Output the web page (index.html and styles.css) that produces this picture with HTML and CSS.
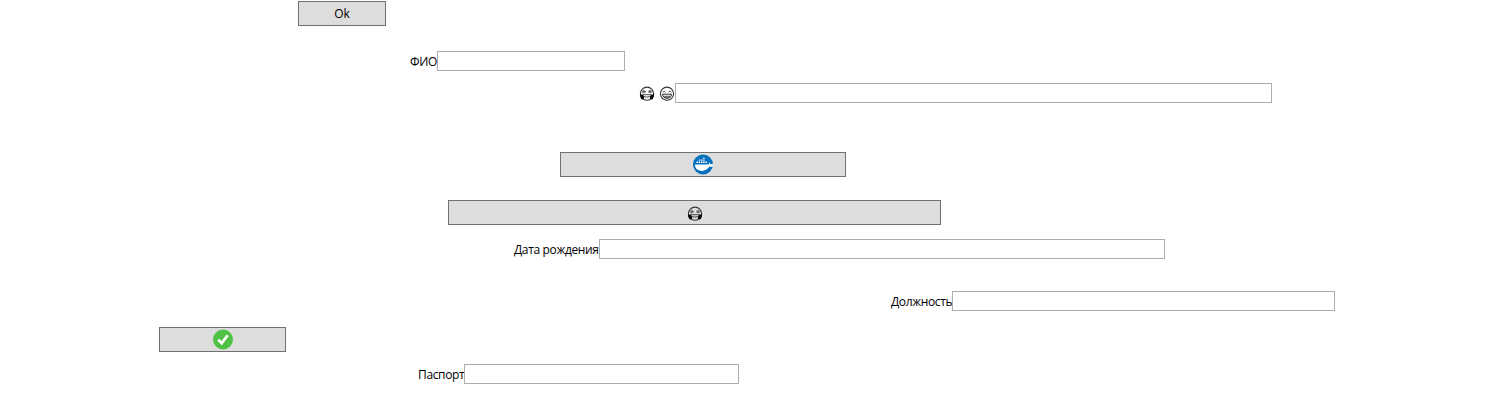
FILE: index.html
```html
<!DOCTYPE html>
<html lang="ru">
<head>
<meta charset="utf-8">
<title>Форма</title>
<link rel="stylesheet" href="styles.css">
</head>
<body>
<svg class="defs" width="0" height="0" aria-hidden="true">
  <symbol id="face-star" viewBox="0 0 16 16">
    <circle cx="8" cy="7.700" r="6.600" fill="none" stroke="#333" stroke-width="1.100"/>
    <path d="M3.200 5.300l1.700-1 1.700 1-.6 1.500H3.800zM9.400 5.300l1.700-1 1.700 1-.6 1.500H10z" fill="#777" stroke="#444" stroke-width=".5"/>
    <path d="M.9 8.500h2.700l1.300 1.600.2 2.700-1.900.8C1.900 13 1 11 .9 8.500zM15.100 8.500h-2.700l-1.300 1.600-.2 2.700 1.900.8c1.300-.6 2.200-2.600 2.300-5.100z" fill="#080808"/>
    <path d="M3.600 8.700h8.800M4.800 10.600q3.200 1 6.400 0" fill="none" stroke="#333" stroke-width=".9"/>
  </symbol>
  <symbol id="face-grin" viewBox="0 0 16 16">
    <circle cx="8" cy="7.700" r="6.600" fill="none" stroke="#333" stroke-width="1.100"/>
    <path d="M3.800 6.200q1.300-2 2.700 0M9.500 6.200q1.300-2 2.700 0" fill="none" stroke="#333" stroke-width=".9"/>
    <path d="M3.500 8.200h9c-.2 2.700-2 4.100-4.500 4.100s-4.300-1.400-4.500-4.100z" fill="#777" stroke="#222" stroke-width=".9"/>
    <path d="M4.300 9.300h7.400" stroke="#eee" stroke-width="1"/>
  </symbol>
</svg>
<main class="form">
  <button class="button button-ok">Ok</button>
  <label class="field field-name"><span class="label">ФИО</span><input class="input" type="text"></label>
  <label class="field field-mood"><span class="label label-icons"><svg class="face"><use href="#face-star"/></svg><svg class="face"><use href="#face-grin"/></svg></span><input class="input" type="text"></label>
  <button class="button button-docker" aria-label="Docker">
    <svg class="icon" viewBox="0 0 22 22">
      <circle cx="11" cy="10.500" r="10" fill="#0570be"/>
      <path d="M3 10.600h13.300c.8-.5.7-1.500.4-2.200 1 .4 1.500 1.100 1.500 1.600 1.200-.2 2.200 0 2.900.3v1.300c-1 .5-2.400.6-3.500.5-1.400 3-4.200 4.800-7.900 4.800-4.300 0-6.700-2.400-6.700-6.300z" fill="#fff"/>
      <path d="M17.600 12.100c1.200.1 2.600-.2 3.500-.7v1.700h-3.900z" fill="#ddd"/>
      <path d="M4.500 7.500H6V9H4.500zM6.700 7.500h1.500V9H6.700zM8.900 7.500h1.500V9H8.900zM11.100 7.500h1.500V9h-1.500zM13.300 7.500h1.500V9h-1.500zM6.700 5.400h1.500v1.400H6.700zM8.900 5.400h1.500v1.400H8.900zM11.100 5.400h1.500v1.400h-1.500zM11.100 3.400h1.500v1.300h-1.500z" fill="#fff"/>
    </svg>
  </button>
  <button class="button button-star" aria-label="Star"><svg class="face"><use href="#face-star"/></svg></button>
  <label class="field field-birth"><span class="label">Дата рождения</span><input class="input" type="text"></label>
  <label class="field field-job"><span class="label">Должность</span><input class="input" type="text"></label>
  <button class="button button-check" aria-label="Check">
    <svg class="icon" viewBox="0 0 22 22">
      <circle cx="11" cy="10.500" r="10" fill="#4fc245"/>
      <path d="M6.300 10.700l3.400 3.400 6-7.800" fill="none" stroke="#fff" stroke-width="2.700"/>
    </svg>
  </button>
  <label class="field field-passport"><span class="label">Паспорт</span><input class="input" type="text"></label>
</main>
</body>
</html>
```
FILE: styles.css
```css
* { box-sizing: border-box; }
body {
  margin: 0;
  background: #fff;
  color: #000;
  font: 12px/16px "Open Sans", "Noto Sans", sans-serif;
}
.defs { display: block; }
.form { display: flex; flex-direction: column; align-items: flex-start; padding-top: 1px; }
.button {
  display: flex;
  align-items: center;
  justify-content: center;
  height: 25px;
  padding: 0;
  border: 1px solid #707070;
  border-radius: 0;
  background: #ddd;
  color: #000;
  font: inherit;
}
.field { display: flex; height: 20px; }
.label { flex: none; padding-top: 3px; white-space: nowrap; letter-spacing: -.35px; }
.label-icons { display: flex; gap: 4px; }
.input {
  height: 20px;
  padding: 0 3px;
  border: 1px solid #abadb3;
  border-radius: 0;
  background: #fff;
  font: inherit;
  outline: none;
}
.face { display: block; width: 16px; height: 16px; }
.icon { display: block; width: 22px; height: 22px; }

.button-ok { width: 88px; margin-left: 298px; }
.field-name { margin: 25px 0 0 410px; }
.field-name .label { width: 27px; }
.field-name .input { width: 188px; }
.field-mood { margin: 12px 0 0 639px; }
.field-mood .label { width: 36px; }
.field-mood .input { width: 597px; }
.button-docker { width: 286px; margin: 49px 0 0 560px; }
.button-star { width: 493px; margin: 23px 0 0 448px; padding-top: 2px; }
.field-birth { margin: 14px 0 0 514px; }
.field-birth .label { width: 85px; }
.field-birth .input { width: 566px; }
.field-job { margin: 32px 0 0 891px; }
.field-job .label { width: 61px; }
.field-job .input { width: 383px; }
.button-check { width: 127px; margin: 16px 0 0 159px; }
.field-passport { margin: 12px 0 0 418px; }
.field-passport .label { width: 46px; }
.field-passport .input { width: 275px; }
```
